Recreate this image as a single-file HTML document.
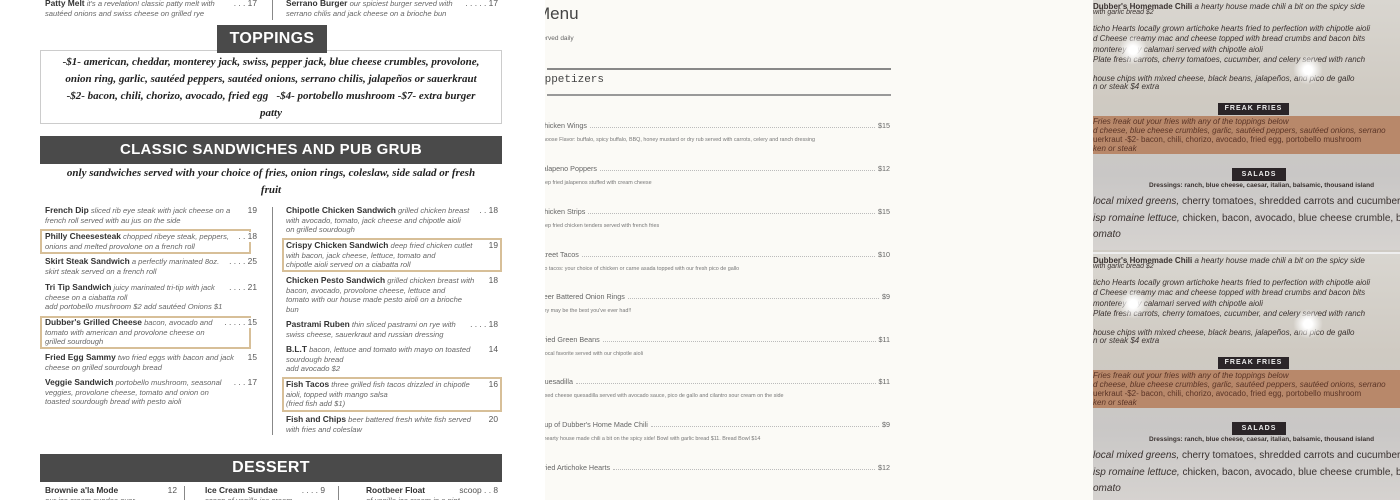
<!DOCTYPE html>
<html><head><meta charset="utf-8"><style>
*{margin:0;padding:0;box-sizing:border-box}
body{width:1400px;height:500px;overflow:hidden;background:#fff;position:relative;font-family:"Liberation Sans",sans-serif}
.a{position:absolute;white-space:nowrap}
#L{position:absolute;left:0;top:0;width:545px;height:500px;background:#fff;overflow:hidden}
.it{position:absolute;font-size:7.6px;line-height:9.6px;color:#555;width:212px;white-space:nowrap}
.it b{color:#333;font-size:8.4px}
.it i{color:#666}
.pr{position:absolute;right:0;top:0;color:#555;background:#fff;padding-left:2px;font-size:8.4px}
.bx{position:absolute;border:2px solid #d7bf98}
.ban{position:absolute;background:#4a4a4a;color:#fff;font-weight:bold;text-align:center;letter-spacing:.3px}
.scr{position:absolute;font-family:"Liberation Serif",serif;font-style:italic;font-weight:bold;color:#222;font-size:11px;text-align:center;line-height:17px;white-space:nowrap}
#M{position:absolute;left:545px;top:0;width:548px;height:500px;background:#fbfaf6;overflow:hidden;color:#555}
.mi{position:absolute;left:-6px;width:351px;font-size:7.2px;color:#666}
.mi .n{display:flex;align-items:flex-end}
.mi .n span.d{flex:1;border-bottom:1px dotted #bbb;margin:0 3px 2px}
.mi .ds{font-size:5.4px;color:#777;margin-top:7px;white-space:nowrap}
#R{position:absolute;left:1093px;top:0;width:307px;height:500px;overflow:hidden;background:#cfcbc4}
.ph{position:absolute;left:0;width:307px;height:250px;overflow:hidden;background:linear-gradient(#d9d6d0,#cfcac2 40%,#c9c7c6 70%,#d6d3d0);font-family:"Liberation Sans",sans-serif;color:#3a3230}
.ph .t{position:absolute;white-space:nowrap;font-size:8px;font-style:italic}
</style></head><body>
<div id="L">
<div class="a" style="left:272px;top:0;width:1px;height:20px;background:#888"></div>
<div class="it" style="left:45px;top:-1px"><b>Patty Melt</b> <i>it's a revelation! classic patty melt with</i><br><i>sautéed onions and swiss cheese on grilled rye</i><span class="pr">. . . 17</span></div>
<div class="it" style="left:286px;top:-1px"><b>Serrano Burger</b> <i>our spiciest burger served with</i><br><i>serrano chilis and jack cheese on a brioche bun</i><span class="pr">. . . . . 17</span></div>
<div class="a" style="left:40px;top:50px;width:462px;height:74px;border:1.5px solid #ccc"></div>
<div class="ban" style="left:217px;top:25px;width:110px;height:28px;font-size:16px;line-height:28px">TOPPINGS</div>
<div class="scr" style="left:44px;top:54px;width:454px">-$1- american, cheddar, monterey jack, swiss, pepper jack, blue cheese crumbles, provolone,<br>onion ring, garlic, sautéed peppers, sautéed onions, serrano chilis, jalapeños or sauerkraut<br>-$2- bacon, chili, chorizo, avocado, fried egg &nbsp; -$4- portobello mushroom -$7- extra burger<br>patty</div>
<div class="ban" style="left:40px;top:136px;width:462px;height:28px;font-size:15px;line-height:28px">CLASSIC SANDWICHES AND PUB GRUB</div>
<div class="scr" style="left:50px;top:165px;width:442px">only sandwiches served with your choice of fries, onion rings, coleslaw, side salad or fresh<br>fruit</div>
<div class="a" style="left:272px;top:207px;width:1px;height:228px;background:#888"></div>
<div class="bx" style="left:40px;top:229px;width:211px;height:25px"></div>
<div class="bx" style="left:40px;top:316px;width:211px;height:33px"></div>
<div class="bx" style="left:282px;top:238px;width:220px;height:34px"></div>
<div class="bx" style="left:282px;top:377px;width:220px;height:35px"></div>
<div class="it" style="left:45px;top:206px"><b>French Dip</b> <i>sliced rib eye steak with jack cheese on a</i><br><i>french roll served with au jus on the side</i><span class="pr">19</span></div>
<div class="it" style="left:45px;top:232px"><b>Philly Cheesesteak</b> <i>chopped ribeye steak, peppers,</i><br><i>onions and melted provolone on a french roll</i><span class="pr">. . 18</span></div>
<div class="it" style="left:45px;top:257px"><b>Skirt Steak Sandwich</b> <i>a perfectly marinated 8oz.</i><br><i>skirt steak served on a french roll</i><span class="pr">. . . . 25</span></div>
<div class="it" style="left:45px;top:283px"><b>Tri Tip Sandwich</b> <i>juicy marinated tri-tip with jack</i><br><i>cheese on a ciabatta roll</i><br><i>add portobello mushroom $2 add sautéed Onions $1</i><span class="pr">. . . . 21</span></div>
<div class="it" style="left:45px;top:318px"><b>Dubber's Grilled Cheese</b> <i>bacon, avocado and</i><br><i>tomato with american and provolone cheese on</i><br><i>grilled sourdough</i><span class="pr">. . . . . 15</span></div>
<div class="it" style="left:45px;top:353px"><b>Fried Egg Sammy</b> <i>two fried eggs with bacon and jack</i><br><i>cheese on grilled sourdough bread</i><span class="pr">15</span></div>
<div class="it" style="left:45px;top:378px"><b>Veggie Sandwich</b> <i>portobello mushroom, seasonal</i><br><i>veggies, provolone cheese, tomato and onion on</i><br><i>toasted sourdough bread with pesto aioli</i><span class="pr">. . . 17</span></div>
<div class="it" style="left:286px;top:206px"><b>Chipotle Chicken Sandwich</b> <i>grilled chicken breast</i><br><i>with avocado, tomato, jack cheese and chipotle aioli</i><br><i>on grilled sourdough</i><span class="pr">. . 18</span></div>
<div class="it" style="left:286px;top:241px"><b>Crispy Chicken Sandwich</b> <i>deep fried chicken cutlet</i><br><i>with bacon, jack cheese, lettuce, tomato and</i><br><i>chipotle aioli served on a ciabatta roll</i><span class="pr">19</span></div>
<div class="it" style="left:286px;top:276px"><b>Chicken Pesto Sandwich</b> <i>grilled chicken breast with</i><br><i>bacon, avocado, provolone cheese, lettuce and</i><br><i>tomato with our house made pesto aioli on a brioche</i><br><i>bun</i><span class="pr">18</span></div>
<div class="it" style="left:286px;top:320px"><b>Pastrami Ruben</b> <i>thin sliced pastrami on rye with</i><br><i>swiss cheese, sauerkraut and russian dressing</i><span class="pr">. . . . 18</span></div>
<div class="it" style="left:286px;top:345px"><b>B.L.T</b> <i>bacon, lettuce and tomato with mayo on toasted</i><br><i>sourdough bread</i><br><i>add avocado $2</i><span class="pr">14</span></div>
<div class="it" style="left:286px;top:380px"><b>Fish Tacos</b> <i>three grilled fish tacos drizzled in chipotle</i><br><i>aioli, topped with mango salsa</i><br><i>(fried fish add $1)</i><span class="pr">16</span></div>
<div class="it" style="left:286px;top:415px"><b>Fish and Chips</b> <i>beer battered fresh white fish served</i><br><i>with fries and coleslaw</i><span class="pr">20</span></div>
<div class="ban" style="left:40px;top:454px;width:462px;height:28px;font-size:16px;line-height:28px">DESSERT</div>
<div class="it" style="left:45px;top:486px;width:132px"><b>Brownie a'la Mode</b><br><i>our ice cream sundae over</i><span class="pr">12</span></div>
<div class="a" style="left:184px;top:486px;width:1px;height:20px;background:#888"></div>
<div class="it" style="left:205px;top:486px;width:120px"><b>Ice Cream Sundae</b><br><i>scoop of vanilla ice cream</i><span class="pr">. . . . 9</span></div>
<div class="a" style="left:338px;top:486px;width:1px;height:20px;background:#888"></div>
<div class="it" style="left:366px;top:486px;width:132px"><b>Rootbeer Float</b><br><i>of vanilla ice cream in a pint</i><span class="pr">scoop . . 8</span></div>
</div>

<div id="M">
<div class="a" style="left:-9px;top:4px;font-size:17px;color:#444">Menu</div>
<div class="a" style="left:-6px;top:35px;font-size:6.5px;color:#666">served daily</div>
<div class="a" style="left:2px;top:68px;width:344px;height:1.5px;background:#888"></div>
<div class="a" style="left:-7px;top:74px;font-family:'Liberation Mono',monospace;font-size:11px;color:#444">Appetizers</div>
<div class="a" style="left:2px;top:94px;width:344px;height:1.5px;background:#999"></div>
<div class="mi" style="top:121px"><div class="n"><span>Chicken Wings</span><span class="d"></span><span>$15</span></div><div class="ds">Choose Flavor: buffalo, spicy buffalo, BBQ, honey mustard or dry rub served with carrots, celery and ranch dressing</div></div>
<div class="mi" style="top:164px"><div class="n"><span>Jalapeno Poppers</span><span class="d"></span><span>$12</span></div><div class="ds">deep fried jalapenos stuffed with cream cheese</div></div>
<div class="mi" style="top:207px"><div class="n"><span>Chicken Strips</span><span class="d"></span><span>$15</span></div><div class="ds">deep fried chicken tenders served with french fries</div></div>
<div class="mi" style="top:250px"><div class="n"><span>Street Tacos</span><span class="d"></span><span>$10</span></div><div class="ds">two tacos: your choice of chicken or carne asada topped with our fresh pico de gallo</div></div>
<div class="mi" style="top:292px"><div class="n"><span>Beer Battered Onion Rings</span><span class="d"></span><span>$9</span></div><div class="ds">they may be the best you've ever had!!</div></div>
<div class="mi" style="top:335px"><div class="n"><span>Fried Green Beans</span><span class="d"></span><span>$11</span></div><div class="ds">a local favorite served with our chipotle aioli</div></div>
<div class="mi" style="top:377px"><div class="n"><span>Quesadilla</span><span class="d"></span><span>$11</span></div><div class="ds">mixed cheese quesadilla served with avocado sauce, pico de gallo and cilantro sour cream on the side</div></div>
<div class="mi" style="top:420px"><div class="n"><span>Cup of Dubber's Home Made Chili</span><span class="d"></span><span>$9</span></div><div class="ds">a hearty house made chili a bit on the spicy side! Bowl with garlic bread $11. Bread Bowl $14</div></div>
<div class="mi" style="top:463px"><div class="n"><span>Fried Artichoke Hearts</span><span class="d"></span><span>$12</span></div></div>
</div>

<div id="R">
<div class="ph" style="top:0">
<div class="t" style="left:0;top:2px;font-style:normal;font-weight:bold">Dubber's Homemade Chili <span style="font-weight:normal;font-style:italic">a hearty house made chili a bit on the spicy side</span></div>
<div class="t" style="left:0;top:9px;font-size:7px">with garlic bread $2</div>
<div class="t" style="left:0;top:24px">ticho Hearts <span>locally grown artichoke hearts fried to perfection with chipotle aioli</span></div>
<div class="t" style="left:0;top:34px">d Cheese creamy mac and cheese topped with bread crumbs and bacon bits</div>
<div class="t" style="left:0;top:45px">monterey bay calamari served with chipotle aioli</div>
<div class="t" style="left:0;top:55px">Plate fresh carrots, cherry tomatoes, cucumber, and celery served with ranch</div>
<div class="t" style="left:0;top:74px">house chips with mixed cheese, black beans, jalapeños, and pico de gallo</div>
<div class="t" style="left:0;top:82px">n or steak $4 extra</div>
<div class="a" style="left:0;top:116px;width:307px;height:38px;background:#b8886a"></div>
<div class="a" style="left:125px;top:103px;width:71px;height:12px;background:#2b2528;color:#eee;font-size:7px;font-weight:bold;text-align:center;line-height:12px;letter-spacing:1px">FREAK FRIES</div>
<div class="t" style="left:0;top:117px;color:#5a3426">Fries freak out your fries with any of the toppings below</div>
<div class="t" style="left:0;top:126px;color:#5a3426">d cheese, blue cheese crumbles, garlic, sautéed peppers, sautéed onions, serrano</div>
<div class="t" style="left:0;top:135px;color:#5a3426;font-style:normal">uerkraut -$2- bacon, chili, chorizo, avocado, fried egg, portobello mushroom</div>
<div class="t" style="left:0;top:144px;color:#5a3426">ken or steak</div>
<div class="a" style="left:139px;top:168px;width:54px;height:13px;background:#2b2528;color:#eee;font-size:7px;font-weight:bold;text-align:center;line-height:13px;letter-spacing:1px">SALADS</div>
<div class="t" style="left:56px;top:182px;font-size:6.5px;font-weight:bold;font-style:normal">Dressings: ranch, blue cheese, caesar, italian, balsamic, thousand island</div>
<div class="t" style="left:0;top:196px;font-size:10px">local mixed greens, <span style="font-style:normal">cherry tomatoes, shredded carrots and cucumbers</span></div>
<div class="t" style="left:0;top:213px;font-size:10px">isp romaine lettuce, <span style="font-style:normal">chicken, bacon, avocado, blue cheese crumble, bo</span></div>
<div class="t" style="left:0;top:229px;font-size:10px">omato</div>
<div class="a" style="left:25px;top:35px;width:30px;height:30px;border-radius:50%;background:radial-gradient(#fff 20%,rgba(255,255,255,0) 70%)"></div>
<div class="a" style="left:200px;top:55px;width:30px;height:30px;border-radius:50%;background:radial-gradient(#fff 20%,rgba(255,255,255,0) 70%)"></div>
</div>
<div class="ph" style="top:252px;border-top:2px solid #eee">
<div class="t" style="left:0;top:2px;font-style:normal;font-weight:bold">Dubber's Homemade Chili <span style="font-weight:normal;font-style:italic">a hearty house made chili a bit on the spicy side</span></div>
<div class="t" style="left:0;top:9px;font-size:7px">with garlic bread $2</div>
<div class="t" style="left:0;top:24px">ticho Hearts <span>locally grown artichoke hearts fried to perfection with chipotle aioli</span></div>
<div class="t" style="left:0;top:34px">d Cheese creamy mac and cheese topped with bread crumbs and bacon bits</div>
<div class="t" style="left:0;top:45px">monterey bay calamari served with chipotle aioli</div>
<div class="t" style="left:0;top:55px">Plate fresh carrots, cherry tomatoes, cucumber, and celery served with ranch</div>
<div class="t" style="left:0;top:74px">house chips with mixed cheese, black beans, jalapeños, and pico de gallo</div>
<div class="t" style="left:0;top:82px">n or steak $4 extra</div>
<div class="a" style="left:0;top:116px;width:307px;height:38px;background:#b8886a"></div>
<div class="a" style="left:125px;top:103px;width:71px;height:12px;background:#2b2528;color:#eee;font-size:7px;font-weight:bold;text-align:center;line-height:12px;letter-spacing:1px">FREAK FRIES</div>
<div class="t" style="left:0;top:117px;color:#5a3426">Fries freak out your fries with any of the toppings below</div>
<div class="t" style="left:0;top:126px;color:#5a3426">d cheese, blue cheese crumbles, garlic, sautéed peppers, sautéed onions, serrano</div>
<div class="t" style="left:0;top:135px;color:#5a3426;font-style:normal">uerkraut -$2- bacon, chili, chorizo, avocado, fried egg, portobello mushroom</div>
<div class="t" style="left:0;top:144px;color:#5a3426">ken or steak</div>
<div class="a" style="left:139px;top:168px;width:54px;height:13px;background:#2b2528;color:#eee;font-size:7px;font-weight:bold;text-align:center;line-height:13px;letter-spacing:1px">SALADS</div>
<div class="t" style="left:56px;top:182px;font-size:6.5px;font-weight:bold;font-style:normal">Dressings: ranch, blue cheese, caesar, italian, balsamic, thousand island</div>
<div class="t" style="left:0;top:196px;font-size:10px">local mixed greens, <span style="font-style:normal">cherry tomatoes, shredded carrots and cucumbers</span></div>
<div class="t" style="left:0;top:213px;font-size:10px">isp romaine lettuce, <span style="font-style:normal">chicken, bacon, avocado, blue cheese crumble, bo</span></div>
<div class="t" style="left:0;top:229px;font-size:10px">omato</div>
<div class="a" style="left:25px;top:35px;width:30px;height:30px;border-radius:50%;background:radial-gradient(#fff 20%,rgba(255,255,255,0) 70%)"></div>
<div class="a" style="left:200px;top:55px;width:30px;height:30px;border-radius:50%;background:radial-gradient(#fff 20%,rgba(255,255,255,0) 70%)"></div>
</div>
</div>
</body></html>
